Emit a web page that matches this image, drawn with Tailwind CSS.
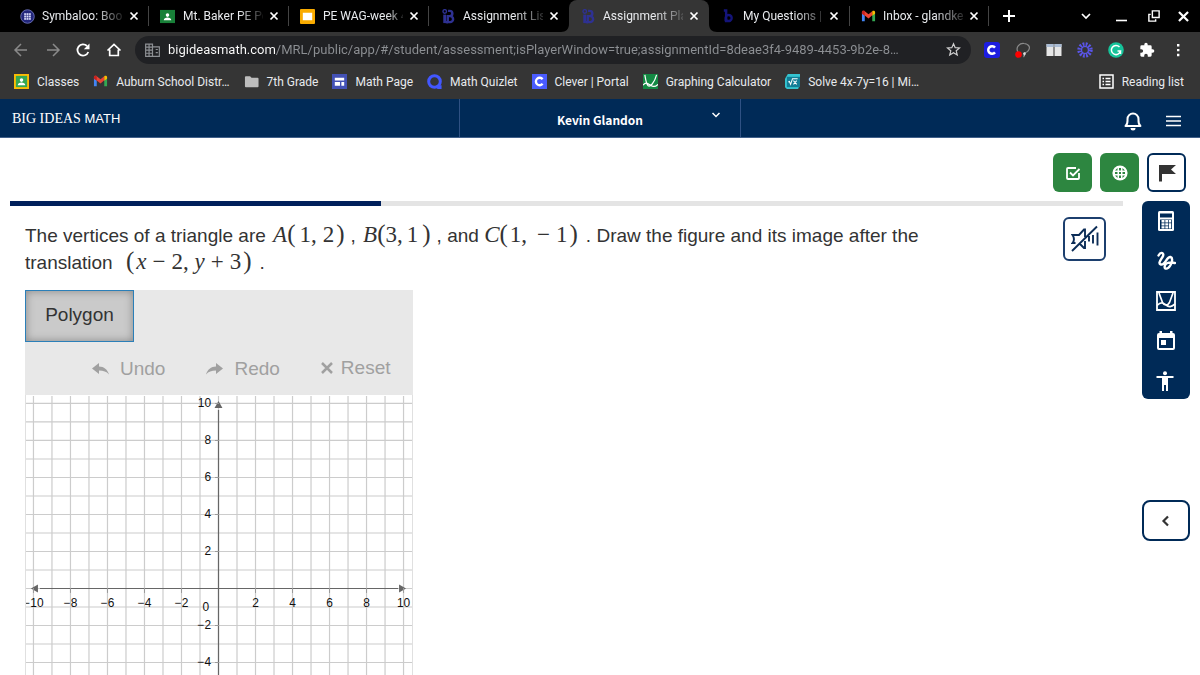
<!DOCTYPE html>
<html lang="en">
<head>
<meta charset="utf-8">
<meta name="viewport" content="width=device-width, initial-scale=1">
<title>Assignment Player</title>
<script src="https://cdn.jsdelivr.net/npm/@tailwindcss/browser@4"></script>
</head>
<body class="flex h-screen flex-col overflow-hidden bg-white font-['Roboto',sans-serif] text-[12px] text-[#e8eaed]">
<svg class="hidden" aria-hidden="true">
  <symbol id="x" viewBox="0 0 10 10"><path d="M1.500 1.500l7 7M8.500 1.500l-7 7" stroke="currentColor" stroke-width="1.700" fill="none"/></symbol>
  <symbol id="gmail" viewBox="0 0 16 16"><path d="M1 4v9h3V7z" fill="#4285f4"/><path d="M15 4v9h-3V7z" fill="#34a853"/><path d="M1 3.500C1 2 3 1.500 4 2.500l4 3 4-3v4.200L8 10 4 6.800 1 5z" fill="#ea4335"/><path d="M12 2.500c1-1 3-.5 3 1V5l-3 2.200z" fill="#fbbc04"/><path d="M1 3.500C1 2 3 1.500 4 2.500v4.300L1 5z" fill="#c5221f"/></symbol>
  <symbol id="person" viewBox="0 0 16 16"><circle cx="8" cy="6.500" r="1.900" fill="#fff"/><path d="M4 12c0-4 8-4 8 0z" fill="#fff"/></symbol>
  <symbol id="bi" viewBox="0 0 14 16"><path d="M1.400 6h3v9h-3z" fill="currentColor"/><path d="M6.500 2h1.800a2.800 2.800 0 0 1 0 5.600H6.200V14h2.500a3.200 3.200 0 0 0 0-6.400" fill="none" stroke="currentColor" stroke-width="2.600"/><path d="M4 12.800h2.500V15.300H4z" fill="currentColor"/><circle cx="3" cy="2.600" r="1.900" fill="none" stroke="currentColor" stroke-width="1.500"/></symbol>
</svg>

<div class="flex h-8 shrink-0 items-stretch bg-black pl-2">
  <div class="flex w-[141px] items-center border-r border-[#3c3c3c] pl-3 [border-image:linear-gradient(transparent_20%,#444_20%,#444_80%,transparent_80%)_1]">
    <svg class="size-[15px]" viewBox="0 0 16 16"><circle cx="8" cy="8" r="7.200" fill="#23277c" stroke="#6a70b5"/><rect x="4.500" y="4.500" width="7" height="7" fill="#dfe2ff"/><path d="M6.800 4v8M9.200 4v8M4 6.800h8M4 9.200h8" stroke="#23277c" stroke-width=".6"/></svg>
    <span class="ml-[7px] w-[81px] overflow-hidden whitespace-nowrap [mask-image:linear-gradient(to_right,black_65%,transparent_105%)]">Symbaloo: Boo</span>
    <button class="ml-1.5" aria-label="Close tab"><svg class="size-[10px] text-white"><use href="#x"/></svg></button>
  </div>
  <div class="flex w-[140px] items-center border-r border-[#3c3c3c] pl-[11px] [border-image:linear-gradient(transparent_20%,#444_20%,#444_80%,transparent_80%)_1]">
    <svg class="size-[15px]" viewBox="0 0 16 16"><path d="M0 1h16v14H0z" fill="#188038"/><use href="#person"/></svg>
    <span class="ml-2 w-20 overflow-hidden whitespace-nowrap [mask-image:linear-gradient(to_right,black_70%,transparent_103%)]">Mt. Baker PE Po</span>
    <button class="ml-1.5" aria-label="Close tab"><svg class="size-[10px] text-white"><use href="#x"/></svg></button>
  </div>
  <div class="flex w-[140px] items-center border-r border-[#3c3c3c] pl-[11px] [border-image:linear-gradient(transparent_20%,#444_20%,#444_80%,transparent_80%)_1]">
    <svg class="size-[15px]" viewBox="0 0 16 16"><rect width="16" height="16" rx="1" fill="#f9ab00"/><path d="M3 4h10v8H3z" fill="#fff"/></svg>
    <span class="ml-2 w-20 overflow-hidden whitespace-nowrap [mask-image:linear-gradient(to_right,black_80%,transparent_103%)]">PE WAG-week 4</span>
    <button class="ml-1.5" aria-label="Close tab"><svg class="size-[10px] text-white"><use href="#x"/></svg></button>
  </div>
  <div class="flex w-[140px] items-center pl-3">
    <svg class="h-[15px] w-[15px] text-[#2e3192]"><use href="#bi"/></svg>
    <span class="ml-[7px] w-20 overflow-hidden whitespace-nowrap [mask-image:linear-gradient(to_right,black_65%,transparent_108%)]">Assignment List</span>
    <button class="ml-1.5" aria-label="Close tab"><svg class="size-[10px] text-white"><use href="#x"/></svg></button>
  </div>
  <div class="relative flex w-[140px] items-center rounded-t-lg bg-[#353535] pl-3">
    <svg class="absolute bottom-0 -left-2 size-2" viewBox="0 0 8 8"><path d="M8 0v8H0c5 0 8-3 8-8z" fill="#353535"/></svg>
    <svg class="absolute -right-2 bottom-0 size-2" viewBox="0 0 8 8"><path d="M0 0v8h8C3 8 0 5 0 0z" fill="#353535"/></svg>
    <svg class="h-[15px] w-[15px] text-[#2e3192]"><use href="#bi"/></svg>
    <span class="ml-[7px] w-20 overflow-hidden whitespace-nowrap [mask-image:linear-gradient(to_right,black_65%,transparent_108%)]">Assignment Play</span>
    <button class="ml-1.5" aria-label="Close tab"><svg class="size-[10px] text-white"><use href="#x"/></svg></button>
  </div>
  <div class="flex w-[141px] items-center border-r border-[#3c3c3c] pl-3 [border-image:linear-gradient(transparent_20%,#444_20%,#444_80%,transparent_80%)_1]">
    <svg class="size-[15px]" viewBox="0 0 16 16"><path d="M3 1.500h2.500V14M5 13V9.500a3.200 3.200 0 1 1 0 .2" fill="none" stroke="#14147a" stroke-width="2.600"/></svg>
    <span class="ml-[7px] w-20 overflow-hidden whitespace-nowrap [mask-image:linear-gradient(to_right,black_65%,transparent_108%)]">My Questions | b</span>
    <button class="ml-1.5" aria-label="Close tab"><svg class="size-[10px] text-white"><use href="#x"/></svg></button>
  </div>
  <div class="flex w-[139px] items-center border-r border-[#3c3c3c] pl-[11px] [border-image:linear-gradient(transparent_20%,#444_20%,#444_80%,transparent_80%)_1]">
    <svg class="size-[15px]"><use href="#gmail"/></svg>
    <span class="ml-[7px] w-20 overflow-hidden whitespace-nowrap [mask-image:linear-gradient(to_right,black_65%,transparent_108%)]">Inbox - glandkev</span>
    <button class="ml-1.5" aria-label="Close tab"><svg class="size-[10px] text-white"><use href="#x"/></svg></button>
  </div>
  <button class="ml-3.5" aria-label="New tab"><svg class="size-3" viewBox="0 0 12 12"><path d="M6 0v12M0 6h12" stroke="#fff" stroke-width="2"/></svg></button>
  <div class="ml-auto flex items-center gap-[21px] pr-2.5">
    <button aria-label="Search tabs"><svg class="mr-1 size-[10px]" viewBox="0 0 10 10"><path d="M1 3l4 4 4-4" fill="none" stroke="#fff" stroke-width="1.700"/></svg></button>
    <button aria-label="Minimize"><svg class="h-[12px] w-[11px]" viewBox="0 0 11 12"><path d="M0 10.500h11" stroke="#fff" stroke-width="1.600"/></svg></button>
    <button aria-label="Restore"><svg class="size-3" viewBox="0 0 11 11"><path d="M4 .8h6.200v6H4zM2.500 4H.8v6.200H7V8.500" fill="none" stroke="#fff" stroke-width="1.300"/></svg></button>
    <button aria-label="Close window"><svg class="-ml-1 size-[13px] text-white"><use href="#x"/></svg></button>
  </div>
</div>

<div class="flex h-[35px] shrink-0 items-center bg-[#353535] pr-3.5 pl-3">
  <button aria-label="Back"><svg class="size-[18px]" viewBox="0 0 18 18"><path d="M15 9H3.500M9 3L3 9l6 6" fill="none" stroke="#8a8a8a" stroke-width="1.500"/></svg></button>
  <button class="ml-3.5" aria-label="Forward"><svg class="size-[18px]" viewBox="0 0 18 18"><path d="M3 9h11.500M9 3l6 6-6 6" fill="none" stroke="#8a8a8a" stroke-width="1.500"/></svg></button>
  <button class="ml-3" aria-label="Reload"><svg class="size-[18px]" viewBox="0 0 18 18"><path d="M14.300 11A5.600 5.600 0 1 1 13 5" fill="none" stroke="#fff" stroke-width="1.800"/><path d="M15.500 2.500V8.200H9.800z" fill="#fff"/></svg></button>
  <button class="ml-[13px]" aria-label="Home"><svg class="size-[18px]" viewBox="0 0 18 18"><path d="M2.500 9.500L9 3.500l6.500 6M4.700 8.500v6h8.600v-6" fill="none" stroke="#fff" stroke-width="1.700"/></svg></button>
  <div class="ml-3 flex h-7 min-w-0 grow items-center rounded-full bg-[#202124] px-2.5">
    <svg class="h-[14px] w-[15px] shrink-0" viewBox="0 0 14 13"><path d="M.6 1h6.400v11.400H.6zM7 3.500h6.400v8.900H7M.6 3.800H7M.6 6.600H7M.6 9.500H7M3.800 1v11.400M10 6h2M10 9h2" fill="none" stroke="#8d9094" stroke-width="1.100"/></svg>
    <input aria-label="Address" type="text" class="ml-2 min-w-0 grow bg-[linear-gradient(to_right,#ffffff_108px,#8d9094_108px)] bg-clip-text text-[13px] text-transparent outline-none" value="bigideasmath.com/MRL/public/app/#/student/assessment;isPlayerWindow=true;assignmentId=8deae3f4-9489-4453-9b2e-8…">
    <button class="shrink-0" aria-label="Bookmark"><svg class="size-[15px]" viewBox="0 0 16 16"><path d="M8 1.800l1.800 4.200 4.600.4-3.500 3 1.100 4.500L8 11.500l-4 2.400 1.100-4.500-3.500-3L6.200 6z" fill="none" stroke="#cfcfcf" stroke-width="1.300"/></svg></button>
  </div>
  <div class="ml-[13px] flex shrink-0 items-center gap-[15px]">
    <svg class="size-4" viewBox="0 0 16 16"><rect width="16" height="16" rx="3" fill="#1c1ce0"/><path d="M11 5.600a3.800 3.800 0 1 0 0 4.800" fill="none" stroke="#fff" stroke-width="2.500"/></svg>
    <svg class="size-4" viewBox="0 0 16 16"><path d="M3 10C0 5 5 1 9 1.500c5 .5 7 4 4 7.500-1.500 2-3 1-3.500 2.500s.5 2-1 3.500" fill="none" stroke="#8b8b8b" stroke-width="1.200"/><path d="M8 11l2-1 1 2-2 2z" fill="#ddd"/><circle cx="3.500" cy="12.500" r="3.300" fill="#f00"/></svg>
    <svg class="size-4" viewBox="0 0 16 16"><path d="M.5 2h7v12h-7zM8.500 2h7v12h-7z" fill="#e6e6e6"/><path d="M.5 2h7v3h-7zM8.500 2h7v3h-7z" fill="#a9bbd3"/></svg>
    <svg class="size-4" viewBox="0 0 16 16"><circle cx="8" cy="8" r="5.300" fill="none" stroke="#5a55e8" stroke-width="4.800" stroke-dasharray="1.600 1.174"/><circle cx="8" cy="8" r="3.500" fill="none" stroke="#5a55e8" stroke-width="1.200"/></svg>
    <svg class="size-4" viewBox="0 0 16 16"><circle cx="8" cy="8" r="7.800" fill="#15c39a"/><path d="M11.500 5A4.600 4.600 0 1 0 12.500 9H9.500M12.500 8.500V12" fill="none" stroke="#fff" stroke-width="1.500"/></svg>
    <svg class="size-4" viewBox="0 0 24 24"><path d="M20.500 11H19V7a2 2 0 0 0-2-2h-4V3.500a2.500 2.500 0 0 0-5 0V5H4a2 2 0 0 0-2 2v3.800h1.500a2.700 2.700 0 0 1 0 5.400H2V20c0 1.100.9 2 2 2h3.800v-1.500a2.700 2.700 0 0 1 5.400 0V22H17a2 2 0 0 0 2-2v-4h1.500a2.500 2.500 0 0 0 0-5z" fill="#fff"/></svg>
    <button aria-label="Menu"><svg class="size-4" viewBox="0 0 16 16"><path d="M7 2h2.400v2.400H7zM7 6.900h2.400v2.400H7zM7 11.800h2.400v2.400H7z" fill="#fff"/></svg></button>
  </div>
</div>

<nav class="flex h-8 shrink-0 items-center gap-[14px] bg-[#353535] pr-4 pb-[3px] pl-3.5 whitespace-nowrap" aria-label="Bookmarks">
  <a href="#" class="flex items-center gap-2"><svg class="size-[15px]" viewBox="0 0 16 16"><path d="M0 0h16v16H0z" fill="#fbbc04"/><path d="M2 2h12v12H2z" fill="#34a853"/><use href="#person"/></svg>Classes</a>
  <a href="#" class="flex items-center gap-2"><svg class="size-[15px]"><use href="#gmail"/></svg>Auburn School Distr…</a>
  <a href="#" class="flex items-center gap-2"><svg class="size-[15px]" viewBox="0 0 16 16"><path d="M1 3.500a1 1 0 0 1 1-1h4.500L8 4h6.500a1 1 0 0 1 1 1v8a1 1 0 0 1-1 1H2a1 1 0 0 1-1-1z" fill="#bdbdbd"/></svg>7th Grade</a>
  <a href="#" class="flex items-center gap-2"><svg class="size-[15px]" viewBox="0 0 16 16"><path d="M0 0h16v16H0z" fill="#4351b5"/><path d="M3 4h10v3H3zM3 8.500h5.500v4H3zM10 8.500h3v4h-3z" fill="#fff"/></svg>Math Page</a>
  <a href="#" class="flex items-center gap-2"><svg class="size-[15px]" viewBox="0 0 16 16"><circle cx="8" cy="8" r="6.200" fill="none" stroke="#4257ff" stroke-width="3.200"/><path d="M10 12h5.500v4H11z" fill="#4257ff"/></svg>Math Quizlet</a>
  <a href="#" class="flex items-center gap-2"><svg class="size-[15px]" viewBox="0 0 16 16"><path d="M0 0h16v16H0z" fill="#4a5cff"/><path d="M11.300 5.500a4 4 0 1 0 0 5" fill="none" stroke="#fff" stroke-width="2.500"/></svg>Clever | Portal</a>
  <a href="#" class="flex items-center gap-2"><svg class="size-[15px]" viewBox="0 0 16 16"><path d="M0 0h16v16H0z" fill="#138a43"/><path d="M2 1c1 6 1.500 10 3.500 11.500S12 10 14.500 1M0 12c3-4 5-2 8 0s5 2 8-1" fill="none" stroke="#fff" stroke-width="1.300"/></svg>Graphing Calculator</a>
  <a href="#" class="flex items-center gap-2"><svg class="size-[15px]" viewBox="0 0 16 16"><path d="M0 5l3-5h13v11l-2 5H2L0 14z" fill="#35c4d0"/><path d="M2 3h14v11H2z" fill="#127d96"/><path d="M3.500 8.500l1.200-.5 1.300 3 2-6h5.500M9 7l3.500 4M12.500 7L9 11" fill="none" stroke="#fff" stroke-width="1.100"/></svg>Solve 4x-7y=16 | Mi…</a>
  <a href="#" class="ml-auto flex items-center gap-2"><svg class="size-[15px]" viewBox="0 0 15 15"><path d="M1 1h13v13H1zM3.500 4.500H5M3.500 7.500H5M3.500 10.500H5M6.500 4.500h5M6.500 7.500h5M6.500 10.500h5" fill="none" stroke="#fff" stroke-width="1.500"/></svg>Reading list</a>
</nav>

<header class="grid h-[39px] shrink-0 grid-cols-[459px_282px_1fr] border-b border-[#41608a] bg-[#002a57] text-white">
  <div class="flex items-center pl-3 text-[13px]"><h1 class="font-['Liberation_Sans',sans-serif]"><span class="font-['Liberation_Serif',serif] text-[14px]">BIG IDEAS</span> MATH</h1></div>
  <button class="relative flex items-center justify-center border-x border-[#2f5183] pt-1 font-['Noto_Sans_CJK_SC',sans-serif] text-[12px] font-bold">Kevin Glandon
    <svg class="absolute top-3 right-5 size-2" viewBox="0 0 8 8"><path d="M.5 2L4 5.500 7.500 2" fill="none" stroke="#fff" stroke-width="1.500"/></svg>
  </button>
  <div class="flex items-center justify-end gap-[23px] pt-[5px] pr-[19px]">
    <button aria-label="Notifications"><svg class="size-5" viewBox="0 0 20 20"><path d="M2.500 15c2.500-2 2-4 2-7a5.500 5.500 0 0 1 11 0c0 3-.5 5 2 7z" fill="none" stroke="#fff" stroke-width="2" stroke-linejoin="round"/><path d="M7.500 17h5a2.500 2.500 0 0 1-5 0z" fill="#fff"/></svg></button>
    <button aria-label="Menu"><svg class="h-3 w-[15px]" viewBox="0 0 15 12"><path d="M0 1.500h15M0 6h15M0 10.500h15" stroke="#fff" stroke-width="1.700"/></svg></button>
  </div>
</header>

<main class="flex flex-col px-2.5 font-['Liberation_Sans',sans-serif] text-[#333]">
  <div class="flex justify-end gap-2 pt-[15px] pr-1 pb-[9px]">
    <button class="grid size-[39px] place-items-center rounded-md bg-[#2d8640]" aria-label="Check answer"><svg class="size-4" viewBox="0 0 16 16"><path d="M14 8v5a1 1 0 0 1-1 1H3a1 1 0 0 1-1-1V4a1 1 0 0 1 1-1h8M5 7.500l3 3 6.500-6.500" fill="none" stroke="#fff" stroke-width="1.800"/></svg></button>
    <button class="grid size-[39px] place-items-center rounded-md bg-[#2d8640]" aria-label="Help"><svg class="size-4" viewBox="0 0 16 16"><circle cx="8" cy="8" r="7.600" fill="#fff"/><path d="M3 5.500L5.500 3v2.500zM13 5.500L10.500 3v2.500zM3 10.500L5.500 13v-2.500zM13 10.500L10.500 13v-2.500zM7 7h2v2H7zM7 3h2v2.500H7zM7 10.500h2V13H7zM3 7h2.500v2H3zM10.500 7H13v2h-2.500z" fill="#2d8640"/></svg></button>
    <button class="grid size-[39px] place-items-center rounded-md border-2 border-[#002a57] bg-white" aria-label="Flag question"><svg class="size-[18px]" viewBox="0 0 18 18"><path d="M1 1h17l-5 4.500 5 4.500H4v7.500H1z" fill="#333"/></svg></button>
  </div>
  <div class="flex items-start gap-[19px]">
    <section class="min-w-0 grow">
      <div class="h-[5px] bg-[#e4e4e4]" role="progressbar" aria-valuenow="1" aria-valuemin="0" aria-valuemax="3" aria-label="Progress"><div class="h-full bg-[#00205b]" style="width:33.300%"></div></div>
      <div class="flex items-start justify-between pt-[11px] pr-[17px] pl-[15px]">
        <p class="max-w-[920px] pt-[5px] text-[19px] leading-[27px]">The vertices of a triangle are <span class="ml-[2px] font-['Liberation_Serif',serif] text-[23px] leading-[0px]"><i>A</i><span class="mr-1 text-[25px]">(</span>1,<span class="ml-1.5">2</span><span class="mr-1.5 ml-[2px] text-[25px]">)</span></span>, <span class="ml-[2px] font-['Liberation_Serif',serif] text-[23px] leading-[0px]"><i>B</i><span class="text-[25px]">(</span>3,<span class="ml-1">1</span><span class="mr-1.5 ml-1 text-[25px]">)</span></span>, and <span class="font-['Liberation_Serif',serif] text-[23px] leading-[0px]"><i>C</i><span class="mr-[2px] text-[25px]">(</span>1,<span class="mr-1.5 ml-2.5">−</span>1<span class="mr-2 ml-[2px] text-[25px]">)</span></span>. Draw the figure and its image after the<br>translation <span class="ml-2 font-['Liberation_Serif',serif] text-[23px] leading-[0px]"><span class="mr-[2px] text-[25px]">(</span><i>x</i><span class="mx-1.5">−</span>2, <i>y</i><span class="mx-1.5">+</span>3<span class="mr-2 ml-[2px] text-[25px]">)</span></span>.</p>
        <button class="grid h-11 w-[43px] place-items-center rounded-md border-2 border-[#1c3f6e] bg-white" aria-label="Read aloud"><svg class="size-7" viewBox="0 0 28 28"><path d="M4.500 18H1.500c2-2.500 2-5 0-8H8l5-5.500h1V12M14 16v7h-1l-4-4M18 11v5.500M22 10v8.500M26.500 7.500v13M1 26L26 1.500" fill="none" stroke="#0c2d57" stroke-width="1.900"/></svg></button>
      </div>
      <div class="mt-[14px] ml-[15px] w-[388px]">
        <div class="h-[105px] bg-[#e8e8e8] text-[19px]">
          <button class="h-[52px] w-[109px] border border-[#2b7fb8] bg-[#cacaca] pb-px shadow-[inset_0_0_8px_#888]">Polygon</button>
          <div class="flex items-center gap-[41px] pt-3 pl-[67px] text-[#a0a0a0]">
            <button class="flex items-center gap-[11px]"><svg class="h-3 w-[17px]" viewBox="0 0 17 12"><path d="M0 5.500L7 0v3.500c5 0 8.500 3 10 8-2.500-3-5.500-4-10-4V11z" fill="currentColor"/></svg>Undo</button>
            <button class="flex items-center gap-[11px]"><svg class="h-3 w-[17px]" viewBox="0 0 17 12"><path d="M17 5.500L10 0v3.500C5 3.500 1.500 6.500 0 11.500c2.500-3 5.500-4 10-4V11z" fill="currentColor"/></svg>Redo</button>
            <button class="flex items-center gap-2 pb-[2px]"><svg class="size-3" viewBox="0 0 12 12"><path d="M1 1l10 10M11 1L1 11" stroke="currentColor" stroke-width="2.500"/></svg>Reset</button>
          </div>
        </div>
        <!-- Coordinate plane, 18.6 units per step, origin at (193.5, 193.5) -->
        <svg class="block h-[388px] w-[388px] border-x border-[#e0e0e0]" viewBox="0 0 388 388" role="img" aria-label="Coordinate plane from -10 to 10">
          <g id="grid" stroke="#cccccc" stroke-width="1.200"></g>
          <g stroke="#666" fill="#666"><path d="M14 193.500H374M193.500 14V388" fill="none" stroke-width="1.200"/><path d="M5 193.500l7-4v8zM382 193.500l-7-4v8zM193.500 5l-4 7h8z" stroke="none"/></g>
          <g id="labels" class="font-['Liberation_Sans',sans-serif] text-[12px]" fill="#111"></g>
        </svg>
      </div>
    </section>
    <aside class="flex w-12 shrink-0 flex-col" aria-label="Tools">
      <div class="flex flex-col items-center gap-5 rounded-md bg-[#002a57] pt-[10px] pb-2">
        <button aria-label="Calculator"><svg class="size-5" viewBox="0 0 20 20"><rect x="2" y="0" width="16" height="20" rx="1.500" fill="#fff"/><path d="M4 2.500h12v4H4zM4 8.500h12v9.500H4z" fill="#002a57"/><path d="M5.500 9h3v2.400h-3zM9.300 9h3v2.400h-3zM13 9h2.200v2.400H13zM5.500 12.200h3v2.400h-3zM9.300 12.200h3v2.400h-3zM13 12.200h2.200v5.400H13zM5.500 15.300h3v2.300h-3zM9.300 15.300h3v2.300h-3z" fill="#fff"/></svg></button>
        <button aria-label="Draw"><svg class="size-5" viewBox="0 0 20 20"><path d="M2.500 4.500C5 0 9 2 6.500 6S2 12.500 5 13.500C9 14.500 11 5 14.500 6c3.500 1.200.5 10-3.500 11.500-3.500 1-3-4 .5-5.500 3-1.200 4.500-.5 7.500 0" fill="none" stroke="#fff" stroke-width="2.400" stroke-linecap="round"/></svg></button>
        <button aria-label="Graph"><svg class="size-5" viewBox="0 0 20 20"><path d="M1 1h18v18H1z" fill="none" stroke="#fff" stroke-width="1.800"/><path d="M3 2l3.500 9.500c2 3.500 5 3.500 7 0L17 2M1 14.500c4-4 6-3 9-.500s5 2 9-1" fill="none" stroke="#fff" stroke-width="1.700"/></svg></button>
        <button aria-label="Calendar"><svg class="size-5" viewBox="0 0 20 20"><path d="M3.500 0h2.500v2h8V0h2.500v2H17a2 2 0 0 1 2 2v13a2 2 0 0 1-2 2H3a2 2 0 0 1-2-2V4a2 2 0 0 1 2-2h.5zM3 7v10h14V7z" fill="#fff" fill-rule="evenodd"/><path d="M5 9h5v5H5z" fill="#fff"/></svg></button>
        <button aria-label="Accessibility"><svg class="size-5" viewBox="0 0 20 20"><circle cx="9" cy="2.200" r="2" fill="#fff"/><path d="M.5 5h17v2H12v13h-2v-6H8v6H6V7H.5z" fill="#fff"/></svg></button>
      </div>
      <button class="mt-[101px] grid h-[41px] place-items-center rounded-lg border-2 border-[#002a57] bg-white" aria-label="Previous"><svg class="size-3" viewBox="0 0 12 12"><path d="M8 1.500L3.500 6 8 10.500" fill="none" stroke="#333" stroke-width="2.200"/></svg></button>
    </aside>
  </div>
</main>
<script>
  const unit = 18.6, origin = 193.5, grid = document.getElementById('grid'), labels = document.getElementById('labels');
  let lines = '', texts = '';
  for (let n = -10; n <= 10; n++) {
    const p = origin + n * unit;
    lines += `<path d="M${p} 0V388M0 ${p}H388"/>`;
    if (n % 2) continue;
    const label = String(n).replace('-', '−');
    if (n) {
      texts += `<path stroke="#999" d="M${p} 193V198M190 ${origin - n * unit}H194"/>`;
      texts += `<text x="${p}" y="212" text-anchor="middle">${label}</text>`;
      texts += `<text x="186" y="${origin - n * unit + 4}" text-anchor="end">${label}</text>`;
    }
  }
  texts += '<text x="184" y="216" text-anchor="end">0</text>';
  grid.innerHTML = lines;
  labels.innerHTML = texts;
</script>
</body>
</html>
